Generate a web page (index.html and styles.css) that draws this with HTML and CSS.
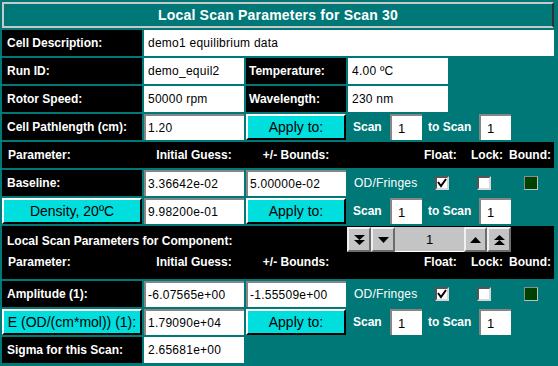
FILE: index.html
```html
<!DOCTYPE html>
<html lang="en">

<head>
    <meta charset="UTF-8">
    <title>Local Scan Parameters</title>
    <link rel="stylesheet" href="styles.css">
</head>

<body>
    <div class="panel">
        <div class="title">Local Scan Parameters for Scan 30</div>

        <div class="row">
            <div class="label">Cell Description:</div>
            <div class="field wide">demo1 equilibrium data</div>
        </div>
        <div class="row">
            <div class="label">Run ID:</div>
            <div class="field">demo_equil2</div>
            <div class="label mid">Temperature:</div>
            <div class="field">4.00 ºC</div>
        </div>
        <div class="row">
            <div class="label">Rotor Speed:</div>
            <div class="field">50000 rpm</div>
            <div class="label mid">Wavelength:</div>
            <div class="field">230 nm</div>
        </div>
        <div class="row">
            <div class="label">Cell Pathlength (cm):</div>
            <div class="field sunken">1.20</div>
            <div class="btn">Apply to:</div>
            <div class="scan-range">
                <span class="scan-lbl">Scan</span>
                <div class="spin-box">1</div>
                <span class="to-lbl">to Scan</span>
                <div class="spin-box">1</div>
            </div>
        </div>

        <div class="row header">
            <span class="h-par">Parameter:</span>
            <span class="h-col">Initial Guess:</span>
            <span class="h-col">+/- Bounds:</span>
            <span class="h-gap"></span>
            <span class="h-float">Float:</span>
            <span class="h-lock">Lock:</span>
            <span class="h-bound">Bound:</span>
        </div>
        <div class="row">
            <div class="label">Baseline:</div>
            <div class="field sunken">3.36642e-02</div>
            <div class="field sunken">5.00000e-02</div>
            <div class="unit">OD/Fringes</div>
            <div class="checks">
                <span class="check float on"><svg width="10" height="10" viewBox="0 0 10 10"><path d="M1 4 L4 8 L9 1" fill="none" stroke="#000" stroke-width="2"/></svg></span>
                <span class="check lock"></span>
                <span class="bound"></span>
            </div>
        </div>
        <div class="row">
            <div class="btn param">Density, 20ºC</div>
            <div class="field sunken">9.98200e-01</div>
            <div class="btn">Apply to:</div>
            <div class="scan-range">
                <span class="scan-lbl">Scan</span>
                <div class="spin-box">1</div>
                <span class="to-lbl">to Scan</span>
                <div class="spin-box">1</div>
            </div>
        </div>

        <div class="band">
            <div class="band-top">
                <span class="band-title">Local Scan Parameters for Component:</span>
                <div class="spinner">
                    <div class="sbtn"><svg width="11" height="12" viewBox="0 0 11 12"><path d="M0 1 H11 L5.5 6 Z M0 6 H11 L5.5 11 Z" fill="#000"/></svg></div>
                    <div class="sbtn"><svg width="11" height="6" viewBox="0 0 11 6"><path d="M0 0 H11 L5.5 6 Z" fill="#000"/></svg></div>
                    <div class="sval">1</div>
                    <div class="sbtn up"><svg width="11" height="6" viewBox="0 0 11 6"><path d="M0 6 H11 L5.5 0 Z" fill="#000"/></svg></div>
                    <div class="sbtn up2"><svg width="11" height="12" viewBox="0 0 11 12"><path d="M0 6 H11 L5.5 1 Z M0 11 H11 L5.5 6 Z" fill="#000"/></svg></div>
                </div>
            </div>
            <div class="header sub">
                <span class="h-par">Parameter:</span>
                <span class="h-col">Initial Guess:</span>
                <span class="h-col">+/- Bounds:</span>
                <span class="h-gap"></span>
                <span class="h-float">Float:</span>
                <span class="h-lock">Lock:</span>
                <span class="h-bound">Bound:</span>
            </div>
        </div>

        <div class="row">
            <div class="label">Amplitude (1):</div>
            <div class="field sunken">-6.07565e+00</div>
            <div class="field sunken">-1.55509e+00</div>
            <div class="unit">OD/Fringes</div>
            <div class="checks">
                <span class="check float on"><svg width="10" height="10" viewBox="0 0 10 10"><path d="M1 4 L4 8 L9 1" fill="none" stroke="#000" stroke-width="2"/></svg></span>
                <span class="check lock"></span>
                <span class="bound"></span>
            </div>
        </div>
        <div class="row">
            <div class="btn param">E (OD/(cm*mol)) (1):</div>
            <div class="field sunken">1.79090e+04</div>
            <div class="btn">Apply to:</div>
            <div class="scan-range">
                <span class="scan-lbl">Scan</span>
                <div class="spin-box">1</div>
                <span class="to-lbl">to Scan</span>
                <div class="spin-box">1</div>
            </div>
        </div>
        <div class="row">
            <div class="label">Sigma for this Scan:</div>
            <div class="field">2.65681e+00</div>
        </div>
    </div>
</body>

</html>
```

FILE: styles.css
```css
* {
    box-sizing: border-box;
}

html,
body {
    margin: 0;
    padding: 0;
    background-color: #007878;
    font-family: "Liberation Sans", Arial, sans-serif;
}

body {
    width: 558px;
    height: 366px;
    overflow: hidden;
}

.panel {
    padding: 2px 4px 0 2px;
}

.title {
    height: 26px;
    margin-bottom: 1px;
    border: 2px solid;
    border-color: #c8c8c8 #303030 #c8c8c8 #c8c8c8;
    color: white;
    font-size: 14px;
    font-weight: bold;
    letter-spacing: 0.2px;
    display: flex;
    align-items: center;
    justify-content: center;
}

.row {
    display: flex;
    gap: 2px;
    height: 26px;
    margin-top: 2px;
}

.label {
    width: 140px;
    flex: none;
    background-color: #000;
    color: white;
    font-size: 12px;
    font-weight: bold;
    padding-left: 5px;
    display: flex;
    align-items: center;
}

.label.mid {
    width: 100px;
    padding-left: 3px;
}

.field {
    width: 100px;
    flex: none;
    background-color: #fff;
    color: #000;
    font-size: 12px;
    letter-spacing: 0.25px;
    padding-left: 4px;
    display: flex;
    align-items: center;
}

.field.wide {
    flex: 1;
}

.field.sunken {
    border-top: 2px solid #868686;
    border-left: 2px solid #868686;
    padding-left: 2px;
}

.btn {
    width: 100px;
    flex: none;
    background-color: #00dede;
    color: #000;
    font-size: 14px;
    border: 2px solid;
    border-color: #fff #000 #000 #fff;
    display: flex;
    align-items: center;
    justify-content: center;
}

.btn.param {
    width: 140px;
}

/* Scan / to Scan range */
.scan-range {
    display: flex;
    align-items: center;
    color: white;
    font-size: 12px;
    font-weight: bold;
}

.scan-lbl {
    width: 42px;
    padding-left: 5px;
}

.to-lbl {
    width: 57px;
    padding-left: 6px;
}

.spin-box {
    width: 32px;
    height: 26px;
    background-color: #fff;
    color: #000;
    font-weight: normal;
    font-size: 13px;
    border-top: 2px solid #868686;
    border-left: 2px solid #868686;
    padding-left: 6px;
    display: flex;
    align-items: center;
}

/* header rows */
.header {
    display: flex;
    gap: 0;
    background-color: #000;
    color: white;
    font-size: 12px;
    font-weight: bold;
    align-items: center;
}

.header span {
    flex: none;
}

.h-par {
    width: 142px;
    padding-left: 6px;
}

.h-col {
    width: 102px;
    padding-right: 2px;
    text-align: center;
}

.h-gap {
    width: 70px;
}

.h-float {
    width: 47px;
    padding-left: 6px;
}

.h-lock {
    width: 44px;
    padding-left: 6px;
}

/* unit and check boxes */
.unit {
    width: 70px;
    flex: none;
    color: white;
    font-size: 12px;
    letter-spacing: 0.2px;
    padding-left: 6px;
    display: flex;
    align-items: center;
}

.checks {
    display: flex;
    align-items: center;
}

.check {
    width: 14px;
    height: 14px;
    background-color: #fff;
    border: 2px solid;
    border-color: #555 #d8d8d8 #d8d8d8 #555;
    display: flex;
    align-items: center;
    justify-content: center;
}

.check.float {
    margin-left: 15px;
}

.check.lock {
    margin-left: 28px;
}

.bound {
    width: 14px;
    height: 14px;
    margin-left: 33px;
    background-color: #004000;
    border: 1px solid;
    border-color: #8c8c8c #c0c0c0 #c0c0c0 #8c8c8c;
}

/* component band */
.band {
    margin-top: 2px;
    height: 53px;
    background-color: #000;
}

.band-top {
    display: flex;
    height: 26px;
    padding-top: 1px;
}

.band-title {
    width: 345px;
    padding: 3px 0 0 5px;
    color: white;
    font-size: 12px;
    font-weight: bold;
    display: flex;
    align-items: center;
}

.spinner {
    display: flex;
    height: 25px;
}

.sbtn {
    width: 24px;
    background-color: #c4c4c4;
    border: 2px solid;
    border-color: #f0f0f0 #6c6c6c #6c6c6c #f0f0f0;
    display: flex;
    align-items: center;
    justify-content: center;
}

.sbtn.up {
    width: 23px;
}

.sval {
    width: 69px;
    background-color: #c4c4c4;
    border-bottom: 1px solid #fff;
    font-size: 13px;
    display: flex;
    align-items: center;
    justify-content: center;
}

.header.sub {
    height: 27px;
    align-items: flex-start;
    line-height: 21px;
}
```
